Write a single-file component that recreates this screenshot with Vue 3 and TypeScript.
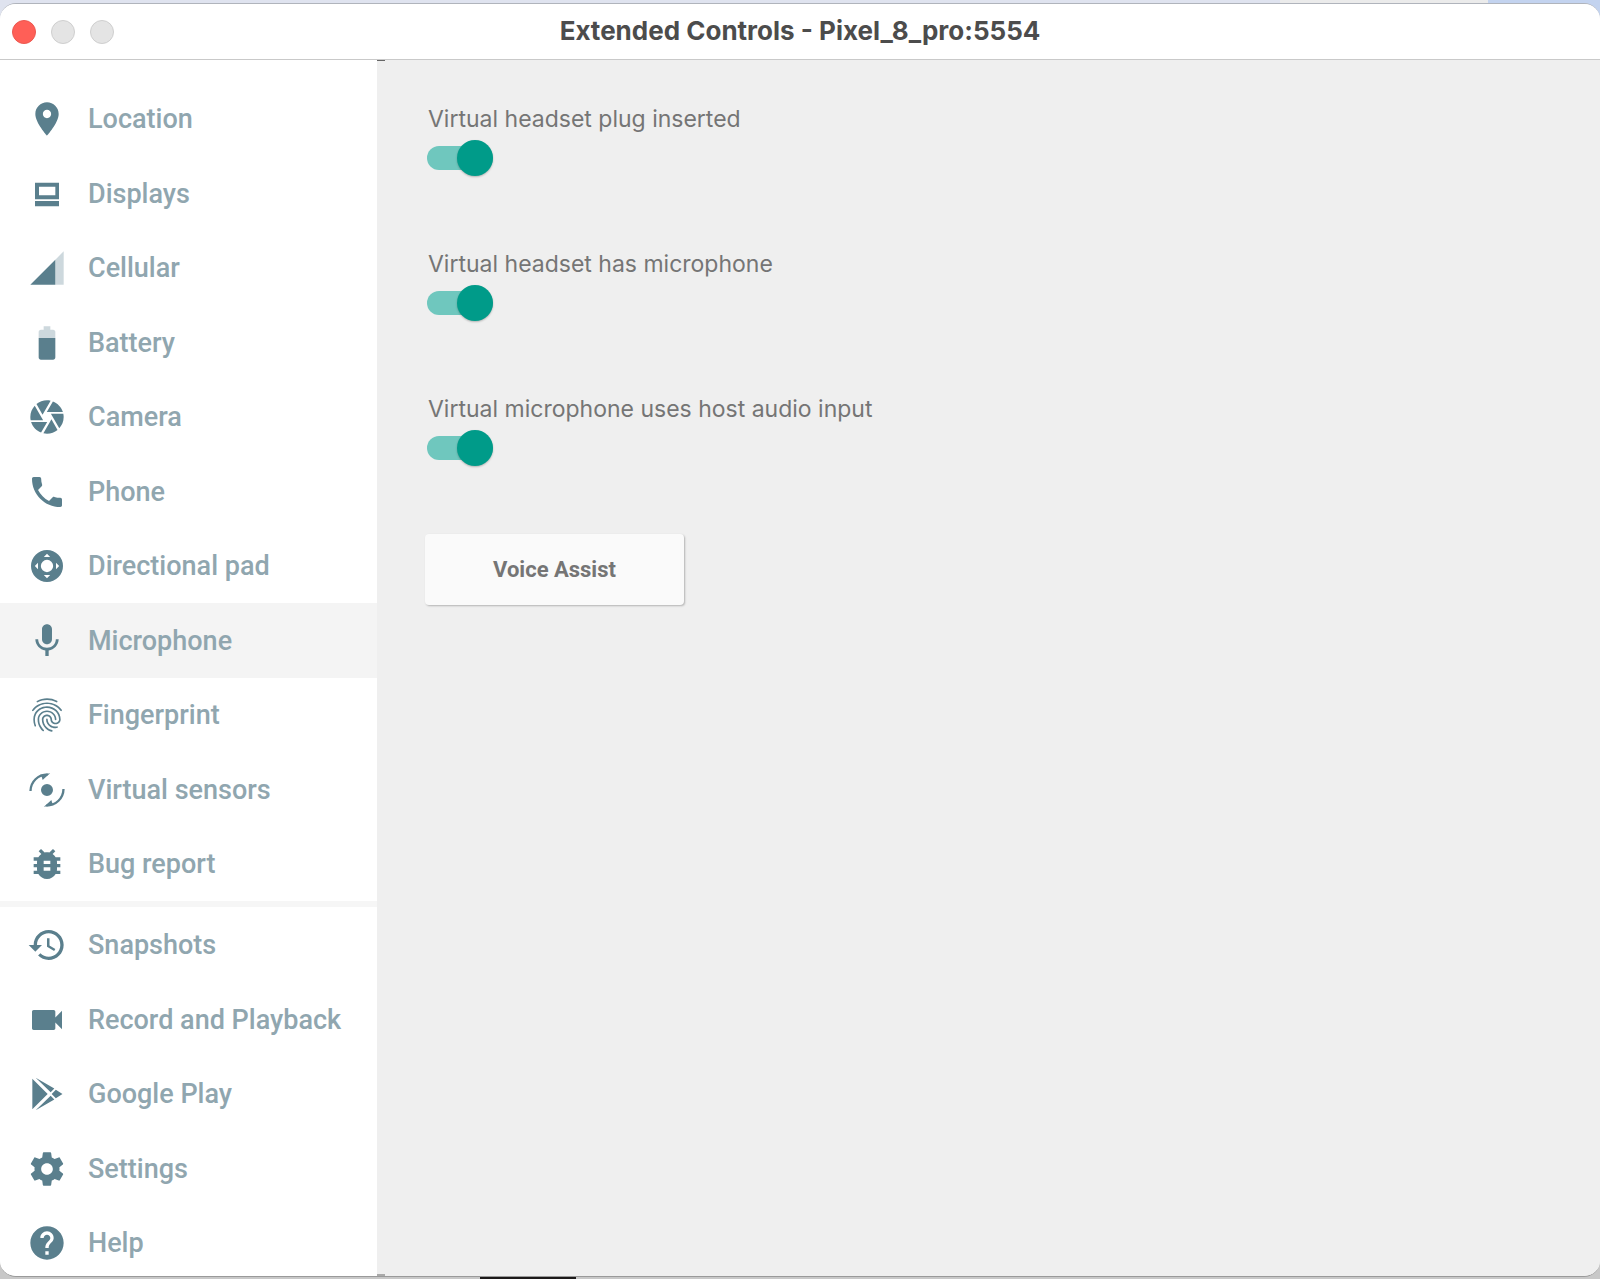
<script setup lang="ts">
import { ref } from 'vue'

interface Shape {
  d: string
  faded?: boolean
  stroked?: boolean
}

interface NavItem {
  label: string
  icon: Shape[]
}

const deviceItems: NavItem[] = [
  {
    label: 'Location',
    icon: [{ d: 'M12 2C8.13 2 5 5.13 5 9c0 5.25 7 13 7 13s7-7.75 7-13c0-3.87-3.13-7-7-7zm0 9.5c-1.38 0-2.5-1.12-2.5-2.5s1.12-2.5 2.5-2.5 2.5 1.12 2.5 2.5-1.12 2.5-2.5 2.5z' }],
  },
  {
    label: 'Displays',
    icon: [{ d: 'M4.8 5.2h14.4v10H4.8zM7.2 7.6v5.1h9.8V7.6zM4.8 16.2h14.4v3.2H4.8z' }],
  },
  {
    label: 'Cellular',
    icon: [{ d: 'M17 7v15h5V2z', faded: true }, { d: 'M17 7L2 22h15z' }],
  },
  {
    label: 'Battery',
    icon: [
      { d: 'M17 5.33C17 4.6 16.4 4 15.67 4H14V2h-4v2H8.33C7.6 4 7 4.6 7 5.33V9h10V5.33z', faded: true },
      { d: 'M7 9v11.67C7 21.4 7.6 22 8.33 22h7.33c.74 0 1.34-.6 1.34-1.33V9H7z' },
    ],
  },
  {
    label: 'Camera',
    icon: [{ d: 'M9.4 10.5l4.77-8.26C13.47 2.09 12.75 2 12 2c-2.4 0-4.6.85-6.32 2.25l3.66 6.35.06-.1zM21.54 9c-.92-2.92-3.15-5.26-6-6.34L11.88 9h9.66zm.26 1h-7.49l.29.5 4.76 8.25C21 16.97 22 14.61 22 12c0-.69-.07-1.35-.2-2zM8.54 12l-3.9-6.75C3.01 7.03 2 9.39 2 12c0 .69.07 1.35.2 2h7.49l-1.15-2zm-6.08 3c.92 2.92 3.15 5.26 6 6.34L12.12 15H2.46zm11.27 0l-3.9 6.76c.7.15 1.42.24 2.17.24 2.4 0 4.6-.85 6.32-2.25l-3.66-6.35-.93 1.6z' }],
  },
  {
    label: 'Phone',
    icon: [{ d: 'M6.62 10.79c1.44 2.83 3.76 5.14 6.59 6.59l2.2-2.2c.27-.27.67-.36 1.02-.24 1.12.37 2.33.57 3.57.57.55 0 1 .45 1 1V20c0 .55-.45 1-1 1-9.39 0-17-7.61-17-17 0-.55.45-1 1-1h3.5c.55 0 1 .45 1 1 0 1.25.2 2.45.57 3.57.11.35.03.74-.25 1.02l-2.2 2.2z' }],
  },
  {
    label: 'Directional pad',
    icon: [{ d: 'M12 2.4a9.6 9.6 0 1 0 0 19.2 9.6 9.6 0 0 0 0-19.2zM12 8.3a3.7 3.7 0 1 1 0 7.4 3.7 3.7 0 0 1 0-7.4zM12 4.7l1.9 1.9h-3.8zM12 19.3l1.9-1.9h-3.8zM4.7 12l1.9-1.9v3.8zM19.3 12l-1.9-1.9v3.8z' }],
  },
  {
    label: 'Microphone',
    icon: [{ d: 'M12 14c1.66 0 2.99-1.34 2.99-3L15 5c0-1.66-1.34-3-3-3S9 3.34 9 5v6c0 1.66 1.34 3 3 3zm5.3-3c0 3-2.54 5.1-5.3 5.1S6.7 14 6.7 11H5c0 3.41 2.72 6.23 6 6.72V21h2v-3.28c3.28-.48 6-3.3 6-6.72h-1.7z' }],
  },
  {
    label: 'Fingerprint',
    icon: [{ d: 'M17.81 4.47c-.08 0-.16-.02-.23-.06C15.66 3.42 14 3 12.01 3c-1.98 0-3.86.47-5.57 1.41-.24.13-.54.04-.68-.2-.13-.24-.04-.55.2-.68C7.82 2.52 9.86 2 12.01 2c2.13 0 3.99.47 6.03 1.52.25.13.34.43.21.67-.09.18-.26.28-.44.28zM3.5 9.72c-.1 0-.2-.03-.29-.09-.23-.16-.28-.47-.12-.7.99-1.4 2.25-2.5 3.75-3.27C9.98 4.04 14 4.03 17.15 5.65c1.5.77 2.76 1.86 3.75 3.25.16.22.11.54-.12.7-.23.16-.54.11-.7-.12-.9-1.26-2.04-2.25-3.39-2.94-2.87-1.47-6.54-1.47-9.4.01-1.36.7-2.5 1.7-3.4 2.96-.08.14-.23.21-.39.21zm6.25 12.07c-.13 0-.26-.05-.35-.15-.87-.87-1.34-1.43-2.01-2.64-.69-1.23-1.05-2.73-1.05-4.34 0-2.97 2.54-5.39 5.66-5.39s5.66 2.42 5.66 5.39c0 .28-.22.5-.5.5s-.5-.22-.5-.5c0-2.42-2.09-4.39-4.66-4.39-2.57 0-4.66 1.97-4.66 4.39 0 1.44.32 2.77.93 3.85.64 1.15 1.08 1.64 1.85 2.42.19.2.19.51 0 .71-.11.1-.24.15-.37.15zm7.17-1.85c-1.19 0-2.24-.3-3.1-.89-1.49-1.01-2.38-2.65-2.38-4.39 0-.28.22-.5.5-.5s.5.22.5.5c0 1.41.72 2.74 1.94 3.56.71.48 1.54.71 2.54.71.24 0 .64-.03 1.04-.1.27-.05.53.13.58.41.05.27-.13.53-.41.58-.57.11-1.07.12-1.21.12zM14.91 22c-.04 0-.09-.01-.13-.02-1.59-.44-2.63-1.03-3.72-2.1-1.4-1.39-2.17-3.24-2.17-5.22 0-1.62 1.38-2.94 3.08-2.94 1.7 0 3.08 1.32 3.08 2.94 0 1.07.93 1.94 2.08 1.94s2.08-.87 2.08-1.94c0-3.77-3.25-6.83-7.25-6.83-2.84 0-5.44 1.58-6.61 4.03-.39.81-.59 1.76-.59 2.8 0 .78.07 2.01.67 3.61.1.26-.03.55-.29.64-.26.1-.55-.04-.64-.29-.49-1.31-.73-2.61-.73-3.96 0-1.2.23-2.29.68-3.24 1.33-2.79 4.28-4.6 7.51-4.6 4.55 0 8.25 3.51 8.25 7.83 0 1.62-1.38 2.94-3.08 2.94s-3.08-1.32-3.08-2.94c0-1.07-.93-1.94-2.08-1.94s-2.08.87-2.08 1.94c0 1.71.66 3.31 1.87 4.51.95.94 1.86 1.46 3.27 1.85.27.07.42.35.35.61-.05.23-.26.38-.47.38z' }],
  },
  {
    label: 'Virtual sensors',
    icon: [
      { d: 'M12 8.4a3.6 3.6 0 1 0 0 7.2 3.6 3.6 0 0 0 0-7.2zM13.9 2L7.5 3l1.3 1 .6 2 1.6-1.5zM10.1 22l6.4-1-1.3-1-.6-2-1.6 1.5z' },
      { d: 'M2.1 12.6C2.2 7 6.6 2.7 12.4 2.6M21.9 11.4C21.8 17 17.4 21.3 11.6 21.4', stroked: true },
    ],
  },
  {
    label: 'Bug report',
    icon: [{ d: 'M20 8h-2.81c-.45-.78-1.07-1.45-1.82-1.96L17 4.41 15.59 3l-2.17 2.17C12.96 5.06 12.49 5 12 5c-.49 0-.96.06-1.41.17L8.41 3 7 4.41l1.62 1.63C7.88 6.55 7.26 7.22 6.81 8H4v2h2.09c-.05.33-.09.66-.09 1v1H4v2h2v1c0 .34.04.67.09 1H4v2h2.81c1.04 1.79 2.97 3 5.19 3s4.15-1.21 5.19-3H20v-2h-2.09c.05-.33.09-.66.09-1v-1h2v-2h-2v-1c0-.34-.04-.67-.09-1H20V8zm-6 8h-4v-2h4v2zm0-4h-4v-2h4v2z' }],
  },
]

const appItems: NavItem[] = [
  {
    label: 'Snapshots',
    icon: [{ d: 'M13 3c-4.97 0-9 4.03-9 9H1l3.89 3.89.07.14L9 12H6c0-3.87 3.13-7 7-7s7 3.13 7 7-3.13 7-7 7c-1.93 0-3.68-.79-4.94-2.06l-1.42 1.42C8.27 19.99 10.51 21 13 21c4.97 0 9-4.03 9-9s-4.03-9-9-9zm-1 5v5l4.28 2.54.72-1.21-3.5-2.08V8H12z' }],
  },
  {
    label: 'Record and Playback',
    icon: [{ d: 'M17 10.5V7c0-.55-.45-1-1-1H4c-.55 0-1 .45-1 1v10c0 .55.45 1 1 1h12c.55 0 1-.45 1-1v-3.5l4 4v-11l-4 4z' }],
  },
  {
    label: 'Google Play',
    icon: [{ d: 'M3.2 2.8L12.4 12 3.2 21.2zM5.2 2.2L16.4 8.7 14.2 10.9zM17.3 9.4L21.3 12l-4 2.6L14.8 12zM5.2 21.8L14.2 13.1l2.2 2.2z' }],
  },
  {
    label: 'Settings',
    icon: [{ d: 'M19.43 12.98c.04-.32.07-.64.07-.98s-.03-.66-.07-.98l2.11-1.65c.19-.15.24-.42.12-.64l-2-3.46c-.12-.22-.39-.3-.61-.22l-2.49 1c-.52-.4-1.08-.73-1.69-.98l-.38-2.65C14.46 2.18 14.25 2 14 2h-4c-.25 0-.46.18-.49.42l-.38 2.65c-.61.25-1.17.59-1.69.98l-2.49-1c-.23-.09-.49 0-.61.22l-2 3.46c-.13.22-.07.49.12.64l2.11 1.65c-.04.32-.07.65-.07.98s.03.66.07.98l-2.11 1.65c-.19.15-.24.42-.12.64l2 3.46c.12.22.39.3.61.22l2.49-1c.52.4 1.08.73 1.69.98l.38 2.65c.03.24.24.42.49.42h4c.25 0 .46-.18.49-.42l.38-2.65c.61-.25 1.17-.59 1.69-.98l2.49 1c.23.09.49 0 .61-.22l2-3.46c.12-.22.07-.49-.12-.64l-2.11-1.65zM12 15.5c-1.93 0-3.5-1.57-3.5-3.5s1.57-3.5 3.5-3.5 3.5 1.57 3.5 3.5-1.57 3.5-3.5 3.5z' }],
  },
  {
    label: 'Help',
    icon: [{ d: 'M12 2C6.48 2 2 6.48 2 12s4.48 10 10 10 10-4.48 10-10S17.52 2 12 2zm1 17h-2v-2h2v2zm2.07-7.75l-.9.92C13.45 12.9 13 13.5 13 15h-2v-.5c0-1.1.45-2.1 1.17-2.83l1.24-1.26c.37-.36.59-.86.59-1.41 0-1.1-.9-2-2-2s-2 .9-2 2H8c0-2.21 1.79-4 4-4s4 1.79 4 4c0 .88-.36 1.68-.93 2.25z' }],
  },
]

const groups = [deviceItems, appItems]
const active = ref('Microphone')

const options = ref([
  { id: 'plug', label: 'Virtual headset plug inserted', on: true },
  { id: 'mic', label: 'Virtual headset has microphone', on: true },
  { id: 'host', label: 'Virtual microphone uses host audio input', on: true },
])
</script>

<template>
  <div class="desktop">
    <div class="window">
      <header class="titlebar">
        <div class="lights">
          <button class="light close" type="button" aria-label="Close"></button>
          <button class="light" type="button" aria-label="Minimize" disabled></button>
          <button class="light" type="button" aria-label="Zoom" disabled></button>
        </div>
        <h1 class="title">Extended Controls - Pixel_8_pro:5554</h1>
      </header>
      <div class="body">
        <nav class="sidebar">
          <ul v-for="(group, g) in groups" :key="g" class="group">
            <li v-for="item in group" :key="item.label" class="row">
              <a
                href="#"
                class="item"
                :class="{ active: item.label === active }"
                @click.prevent="active = item.label"
              >
                <svg class="icon" viewBox="0 0 24 24" aria-hidden="true">
                  <path
                    v-for="shape in item.icon"
                    :key="shape.d"
                    :d="shape.d"
                    :class="{ faded: shape.faded, stroked: shape.stroked }"
                    fill-rule="evenodd"
                  />
                </svg>
                <span>{{ item.label }}</span>
              </a>
            </li>
          </ul>
        </nav>
        <main class="panel">
          <div v-for="option in options" :key="option.id" class="option">
            <label class="caption" :for="option.id">{{ option.label }}</label>
            <input :id="option.id" v-model="option.on" class="toggle" type="checkbox" />
          </div>
          <button class="assist" type="button">Voice Assist</button>
        </main>
      </div>
    </div>
  </div>
</template>

<style>
body {
  margin: 0;
}
</style>

<style scoped>
.desktop {
  box-sizing: border-box;
  display: flex;
  height: 100vh;
  padding: 3px 0 2px;
  background:
    linear-gradient(90deg, transparent 30%, #1c1a1a 30%, #1c1a1a 36%, transparent 36%) bottom / 100% 2px no-repeat,
    linear-gradient(#c8c8c8, #c8c8c8) bottom / 100% 50% no-repeat,
    linear-gradient(90deg, #dfe3ef 80%, #ebebeb 80%, #ebebeb 93%, #c3d3ef 93%);
}

.window {
  flex: 1;
  display: flex;
  flex-direction: column;
  overflow: hidden;
  border-top: 1px solid #b0b4bc;
  border-bottom: 1px solid #9a9a9a;
  border-radius: 16px;
  background: #efefef;
}

.titlebar {
  display: grid;
  grid-template-columns: 1fr auto 1fr;
  align-items: center;
  flex: none;
  height: 55px;
  border-bottom: 1px solid #c9c9c9;
  background: #fff;
}

.lights {
  display: flex;
  gap: 15px;
  padding-left: 12px;
}

.light {
  width: 24px;
  height: 24px;
  padding: 0;
  border: 1px solid #cfcfcf;
  border-radius: 50%;
  background: #e4e4e4;
}

.close {
  border-color: #ec5850;
  background: #ff5f57;
}

.title {
  margin: 0;
  padding-bottom: 2px;
  color: #4c4c4c;
  font: 700 26px/32px Inter, sans-serif;
}

.body {
  flex: 1;
  display: flex;
  min-height: 0;
}

.sidebar {
  flex: none;
  width: 377px;
  padding-top: 22px;
  box-sizing: border-box;
  overflow: hidden;
  background: #fff;
}

.group {
  margin: 0;
  padding: 0;
  list-style: none;
}

.group + .group {
  padding-top: 1px;
  border-top: 6px solid #f6f6f6;
}

.row {
  display: flex;
  height: 74px;
}

.row:nth-child(even) {
  height: 75px;
}

.item {
  flex: 1;
  display: flex;
  align-items: center;
  gap: 21px;
  padding-left: 27px;
  color: #90a6af;
  font: 500 27px/32px Roboto, sans-serif;
  text-decoration: none;
}

.active {
  background: #f4f4f4;
}

.icon {
  width: 40px;
  height: 40px;
  fill: #5a7f8d;
}

.faded {
  fill-opacity: 0.3;
}

.stroked {
  fill: none;
  stroke: #5a7f8d;
  stroke-width: 1.4;
}

.panel {
  flex: 1;
  display: flex;
  flex-direction: column;
  align-items: flex-start;
  padding: 43px 48px;
  background:
    linear-gradient(#666, #666) left top / 8px 1px no-repeat,
    linear-gradient(#aaa, #aaa) left bottom / 8px 2px no-repeat,
    #efefef;
}

.option {
  display: flex;
  flex-direction: column;
  align-items: flex-start;
  height: 145px;
}

.caption {
  padding-left: 3px;
  color: #757575;
  font: 400 23px/32px Inter, sans-serif;
}

.toggle {
  appearance: none;
  position: relative;
  width: 66px;
  height: 24px;
  margin: 11px 0 0 2px;
  border-radius: 12px;
  background: #b8b8b8;
}

.toggle::after {
  content: '';
  position: absolute;
  top: -6px;
  left: 0;
  width: 36px;
  height: 36px;
  border-radius: 50%;
  background: #fafafa;
  box-shadow: 0 1px 2px rgb(0 0 0 / 25%);
}

.toggle:checked {
  background: #6fc7be;
}

.toggle:checked::after {
  right: 0;
  left: auto;
  background: #009b89;
}

.assist {
  width: 259px;
  height: 71px;
  margin: -4px 0 0;
  border: 0;
  border-radius: 4px;
  background: #fafafa;
  box-shadow: 1px 1px 2px rgb(0 0 0 / 25%);
  color: #757575;
  font: 700 22px/32px Roboto, sans-serif;
}
</style>
